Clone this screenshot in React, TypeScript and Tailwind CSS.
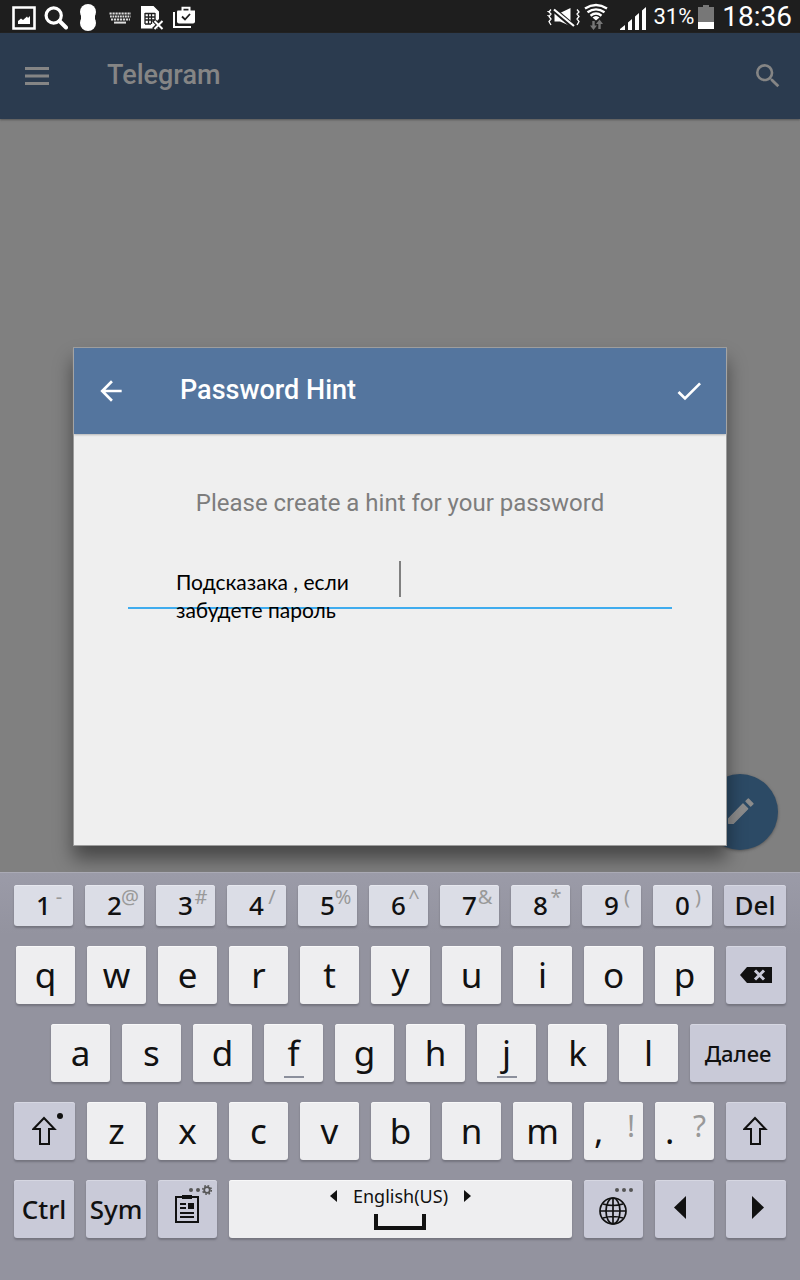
import type { ReactNode } from "react";
import clsx from "clsx";
import { MdArrowBack, MdCheck, MdSearch } from "react-icons/md";

const digits = [
    ["1", "-"],
    ["2", "@"],
    ["3", "#"],
    ["4", "/"],
    ["5", "%"],
    ["6", "^"],
    ["7", "&"],
    ["8", "*"],
    ["9", "("],
    ["0", ")"],
];

type KeyProps = {
    children: ReactNode;
    label?: string;
    tone?: "letter" | "digit" | "control";
    className?: string;
};

function Key({ children, label, tone = "letter", className = "flex-[59]" }: KeyProps) {
    return (
        <button
            type="button"
            aria-label={label}
            className={clsx(
                "relative flex min-w-0 items-center justify-center rounded-[3px] text-[#111111]",
                tone === "letter" && "h-[58px] bg-[#eeeef0] text-[35px] shadow-[0_2px_2px_#74747f,inset_0_1px_0_#f8f8f9]",
                tone === "digit" && "h-[41px] bg-[#dbdde6] text-[26px] font-medium shadow-[0_2px_2px_#74747f,inset_0_1px_0_#e6e7ee]",
                tone === "control" && "bg-[#c9cad8] text-[26px] font-medium shadow-[0_2px_2px_#74747f,inset_0_1px_0_#d6d7e2]",
                className
            )}
        >
            {children}
        </button>
    );
}

function Row({ children, className = "px-3.5" }: { children: ReactNode; className?: string }) {
    return <div className={clsx("flex gap-3", className)}>{children}</div>;
}

function ShiftIcon() {
    return (
        <svg width="26" height="30" viewBox="0 0 26 30" fill="none" stroke="#111" strokeWidth="2">
            <path d="M12 2 L22.5 13 H17 V28 H8 V13 H1.500 Z" />
        </svg>
    );
}

function StatusBar() {
    return (
        <div className="flex h-[33px] items-center justify-between bg-[#1e1e1e] pl-3 pr-2 text-white">
            <div className="flex gap-2">
                <svg width="24" height="33" viewBox="0 0 24 33">
                    <path d="M1.5 7.5 H22.5 V28.5 H1.5 Z" fill="none" stroke="#fff" strokeWidth="2.6" />
                    <path d="M6 24 V21 L9 18.5 L11 20 L15 16.5 L16 18 L18 16 V24 Z" fill="#fff" />
                </svg>
                <svg width="24" height="33" viewBox="0 0 24 33" fill="none" stroke="#fff">
                    <circle cx="9.7" cy="15.5" r="7.6" strokeWidth="3.2" />
                    <path d="M15.5 21 L22 27.5" strokeWidth="4" strokeLinecap="round" />
                </svg>
                <svg width="24" height="33" viewBox="0 0 24 33" fill="#fff">
                    <circle cx="12" cy="12" r="8" />
                    <circle cx="12" cy="23" r="8" />
                    <path d="M5 14 H19 V21 H5 Z" />
                </svg>
                <svg width="24" height="33" viewBox="0 0 24 33" fill="none" stroke="#ddd">
                    <path d="M1.500 13.500 H23" strokeWidth="2.2" strokeDasharray="2.2 0.8" />
                    <path d="M2 16.500 H22.500" strokeWidth="2.2" strokeDasharray="1.8 0.7" />
                    <path d="M3 19.500 H22" strokeWidth="2" strokeDasharray="2.2 0.8" />
                    <path d="M6 22.600 H18" strokeWidth="2" />
                </svg>
                <svg width="24" height="33" viewBox="0 0 24 33">
                    <path d="M1 6 H13.5 L19 11.5 V19 L15 23 L18 27 V28.500 H1 Z" fill="#fff" />
                    <path d="M5 13.500 H15 M5 17 H15 M5 20 H14 M5 24 H11 M5 13 V24 M8.500 13 V24 M11.500 13 V24 M15 13 V19" stroke="#1e1e1e" strokeWidth="1.300" fill="none" />
                    <path d="M13.500 20 L23 29.500 M23 20 L13.500 29.500" stroke="#1e1e1e" strokeWidth="4" />
                    <path d="M14.500 21 L22.500 29 M22.500 21 L14.500 29" stroke="#fff" strokeWidth="2" />
                </svg>
                <svg width="24" height="33" viewBox="0 0 24 33">
                    <path d="M2 12 V27 H19" fill="none" stroke="#fff" strokeWidth="2" />
                    <path d="M6 10.500 H23 V21.500 Q23 23.500 21 23.500 H7 Q5 23.500 5 21.500 V11.500 Q5 10.500 6 10.500 Z" fill="#fff" />
                    <path d="M10.500 11 V7.800 H17.500 V11" fill="none" stroke="#fff" strokeWidth="2" />
                    <path d="M10 16.500 L13 19.500 L18 14" fill="none" stroke="#1e1e1e" strokeWidth="1.800" />
                </svg>
            </div>
            <div className="flex items-center">
                <svg width="33" height="33" viewBox="0 0 33 33" fill="none" stroke="#fff">
                    <path d="M4 9.500 L2 12 L4 14 L2 16.500 L4 19 L2 21.500 L4 25 M1 11 V12 M1 15 V16 M30 9.500 L32 12 L30 14 L32 16.500 L30 19 L32 21.500 L30 25" strokeWidth="1.300" />
                    <path d="M7.500 13 H13 L23.500 8 V26 L13 21.500 H7.500 Z" fill="#fff" stroke="none" />
                    <path d="M6 9 L27 27" stroke="#1e1e1e" strokeWidth="5" />
                    <path d="M7 9.500 L27 26" strokeWidth="2.200" />
                </svg>
                <svg width="24" height="33" viewBox="0 0 24 33" fill="none" stroke="#fff" className="ml-1">
                    <path d="M1 8.500 Q12 1.500 23 8.500 M3.500 12.300 Q12 6.500 20.500 12.300 M6.500 15.700 Q12 11.500 17.500 15.700" strokeWidth="2.400" />
                    <path d="M8.500 17.500 Q12 14.500 15.500 17.500 L12 20.500 Z" fill="#fff" stroke="none" />
                    <path d="M9.500 21 V27 M15.500 29 V22" stroke="#777" strokeWidth="2.400" />
                    <path d="M6 25.500 H13 L9.500 30 Z M12 24 H19 L15.500 19.500 Z" fill="#777" stroke="none" />
                </svg>
                <svg width="27" height="33" viewBox="0 0 27 33" fill="#fff" className="ml-3">
                    <path d="M0 30 V29 L5 25 V30 Z M8 30 V22.500 L12 19 V30 Z M15 30 V16.500 L19 13 V30 Z M22 30 V10.500 L26 7 V30 Z" />
                </svg>
                <span className="ml-1.5 text-[22px] leading-[33px]">31%</span>
                <svg width="16" height="33" viewBox="0 0 16 33" className="ml-1">
                    <path d="M0 7 H5 V5 H11 V7 H16 V22 H0 Z" fill="#777" />
                    <path d="M0 22 H16 V29 H0 Z" fill="#fff" />
                </svg>
                <span className="ml-2 text-[28px] leading-[33px]">18:36</span>
            </div>
        </div>
    );
}

function AppBar() {
    return (
        <header className="flex h-[86px] items-center bg-[#2b3b4f] pl-5 pr-4 text-[#858585] shadow-[0_1px_2px_#555555]">
            <button type="button" aria-label="Menu" className="flex w-[34px] justify-center">
                <svg width="24" height="18" viewBox="0 0 24 18" stroke="currentColor" strokeWidth="3">
                    <path d="M0 1.500 H24 M0 9 H24 M0 16.500 H24" />
                </svg>
            </button>
            <h1 className="ml-[53px] flex-1 pb-0.5 text-[27px] font-medium">Telegram</h1>
            <button type="button" aria-label="Search">
                <MdSearch size={32} />
            </button>
        </header>
    );
}

function HintDialog() {
    return (
        <section
            role="dialog"
            aria-labelledby="dialog-title"
            className="relative border border-[#9c9c9c] bg-[#efefef] shadow-[0_13px_18px_rgba(0,0,0,0.45)]"
        >
            <header className="flex h-[86px] items-center bg-[#54759e] px-[21px] text-white shadow-[0_1px_2px_#b5b5b5]">
                <button type="button" aria-label="Back">
                    <MdArrowBack size={32} />
                </button>
                <h2 id="dialog-title" className="ml-[53px] flex-1 pb-0.5 text-[27px] font-medium">
                    Password Hint
                </h2>
                <button type="button" aria-label="Done">
                    <MdCheck size={32} />
                </button>
            </header>
            <div className="px-[54px] pt-[53px] pb-[236px]">
                <label htmlFor="hint" className="block text-center text-2xl leading-8 text-[#7d7d7d]">
                    Please create a hint for your password
                </label>
                <div className="relative mt-[42px] flex h-12 justify-center border-b-2 border-[#3facee]">
                    <span className="h-9 w-[2px] bg-[#808080]" />
                    <textarea
                        id="hint"
                        rows={2}
                        defaultValue={"Подсказака , если\nзабудете пароль"}
                        className="absolute top-[7px] left-12 w-52 resize-none overflow-hidden bg-transparent font-[Lato,sans-serif] text-[21px] leading-7 text-black outline-none"
                    />
                </div>
            </div>
        </section>
    );
}

function Keyboard() {
    return (
        <div className="relative flex flex-col gap-5 border-t border-[#aaaab5] bg-linear-to-b from-[#9b9ba8] to-[#93939f] to-15% pt-3 pb-[42px] font-['Noto_Sans',sans-serif]">
            <Row>
                {digits.map(([digit, hint]) => (
                    <Key key={digit} tone="digit">
                        {digit}
                        <span className="absolute top-0 right-0 w-7 text-center text-xl leading-6 font-normal text-[#999999]">{hint}</span>
                    </Key>
                ))}
                <Key tone="control" className="h-[41px] flex-[62]">Del</Key>
            </Row>
            <Row className="pl-4 pr-3.5">
                {"qwertyuiop".split("").map((letter) => (
                    <Key key={letter}>{letter}</Key>
                ))}
                <Key tone="control" label="Backspace" className="h-[58px] flex-[60]">
                    <svg width="32" height="16" viewBox="0 0 32 16">
                        <path d="M0 8 L7 0 H32 V16 H7 Z" fill="#111" />
                        <path d="M15 3.500 L24 12.500 M24 3.500 L15 12.500" stroke="#c9cad8" strokeWidth="3" />
                    </svg>
                </Key>
            </Row>
            <Row className="pl-[51px] pr-3.5">
                {"asdfghjkl".split("").map((letter) => (
                    <Key key={letter}>
                        {letter}
                        {(letter === "f" || letter === "j") && (
                            <span className="absolute bottom-1 left-1/2 h-[2px] w-5 -translate-x-1/2 bg-[#8b8f9c]" />
                        )}
                    </Key>
                ))}
                <Key tone="control" className="h-[58px] flex-[96]">
                    <span className="text-[22px]">Далее</span>
                </Key>
            </Row>
            <Row>
                <Key tone="control" label="Shift" className="h-[58px] flex-[61]">
                    <ShiftIcon />
                    <span className="absolute top-[11px] right-3 size-1.5 rounded-full bg-[#111111]" />
                </Key>
                {"zxcvbnm".split("").map((letter) => (
                    <Key key={letter}>{letter}</Key>
                ))}
                {[
                    [",", "!"],
                    [".", "?"],
                ].map(([mark, hint]) => (
                    <Key key={mark}>
                        <span className="w-1/2 text-center">{mark}</span>
                        <span className="w-1/2 pr-2 pb-3 text-right text-[30px] text-[#999999]">{hint}</span>
                    </Key>
                ))}
                <Key tone="control" label="Shift" className="h-[58px] flex-[60]">
                    <ShiftIcon />
                </Key>
            </Row>
            <Row>
                <Key tone="control" className="h-[58px] flex-[60]">Ctrl</Key>
                <Key tone="control" className="h-[58px] flex-[60]">Sym</Key>
                <Key tone="control" label="Clipboard" className="h-[58px] flex-[59]">
                    <svg width="59" height="58" viewBox="0 0 59 58" fill="none" stroke="#111">
                        <path d="M18 17 H40 V42 H18 Z" strokeWidth="2" />
                        <path d="M24 17 H34" strokeWidth="4" />
                        <path d="M22 24 H28 M22 28 H28 M22 33 H36 M22 37 H36" strokeWidth="1.800" />
                        <path d="M30 23 H36 V29 H30 Z" fill="#111" stroke="none" />
                        <circle cx="33" cy="10" r="2" fill="#555" stroke="none" />
                        <circle cx="40" cy="10" r="2" fill="#555" stroke="none" />
                        <circle cx="49" cy="10" r="2.800" stroke="#555" strokeWidth="1.800" />
                        <circle cx="49" cy="10" r="4.300" stroke="#555" strokeWidth="1.500" strokeDasharray="1.690 1.690" />
                    </svg>
                </Key>
                <Key label="English(US)" className="flex-[343]">
                    <span className="flex flex-col items-center gap-1.5 pb-1">
                        <span className="flex items-center gap-4 text-lg leading-6">
                            <svg width="7" height="12" viewBox="0 0 7 12" fill="#111">
                                <path d="M7 0 V12 L0 6 Z" />
                            </svg>
                            English(US)
                            <svg width="7" height="12" viewBox="0 0 7 12" fill="#111">
                                <path d="M0 0 V12 L7 6 Z" />
                            </svg>
                        </span>
                        <span className="h-4 w-[52px] border-4 border-t-0 border-[#111111]" />
                    </span>
                </Key>
                <Key tone="control" label="Language" className="h-[58px] flex-[59]">
                    <svg width="59" height="58" viewBox="0 0 59 58" fill="none" stroke="#111" strokeWidth="1.700">
                        <circle cx="29" cy="31" r="13" />
                        <ellipse cx="29" cy="31" rx="7" ry="13" />
                        <path d="M29 18 V44 M16 31 H42 M19 24 Q29 27 39 24 M19 38 Q29 35 39 38" />
                        <g fill="#555" stroke="none">
                            <circle cx="33" cy="10" r="2" />
                            <circle cx="40" cy="10" r="2" />
                            <circle cx="47" cy="10" r="2" />
                        </g>
                    </svg>
                </Key>
                <Key tone="control" label="Left" className="h-[58px] flex-[59]">
                    <svg width="59" height="58" viewBox="0 0 59 58" fill="#111">
                        <path d="M31 16 V39 L19 27.500 Z" />
                    </svg>
                </Key>
                <Key tone="control" label="Right" className="h-[58px] flex-[60]">
                    <svg width="59" height="58" viewBox="0 0 59 58" fill="#111">
                        <path d="M25 16 V39 L37 27.500 Z" />
                    </svg>
                </Key>
            </Row>
        </div>
    );
}

export default function App() {
    return (
        <div className="flex min-h-screen flex-col bg-[#808080] font-[Roboto,sans-serif]">
            <StatusBar />
            <AppBar />
            <main className="relative flex flex-1 flex-col justify-end px-[73px] pb-[26px]">
                <button
                    type="button"
                    aria-label="New message"
                    className="absolute right-[22px] bottom-[22px] flex size-[76px] items-center justify-center rounded-full bg-[#2c4a65] text-[#8c8c8c] shadow-[0_1px_3px_#555555]"
                >
                    <svg width="28" height="28" viewBox="-6 0 84 84" fill="currentColor" stroke="currentColor" strokeWidth="4" strokeLinejoin="round">
                        <path d="M2 76 V62 L45 18 L59 32 L16 76 Z" />
                        <path d="M54 10 L61 3 L75 17 L68 24 Z" />
                    </svg>
                </button>
                <HintDialog />
            </main>
            <Keyboard />
        </div>
    );
}
